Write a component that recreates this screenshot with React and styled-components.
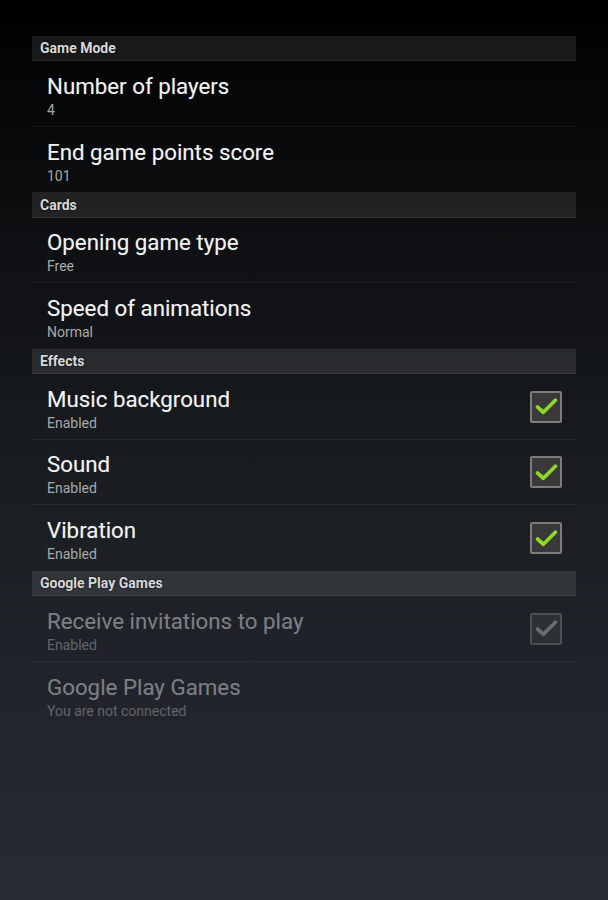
import styled, { createGlobalStyle } from "styled-components";

const GlobalStyle = createGlobalStyle`
  html, body {
    margin: 0;
    padding: 0;
  }
  body {
    background: linear-gradient(180deg, #000000 0%, #0d0f11 25%, #1c2025 60%, #272b32 100%);
    min-height: 900px;
    font-family: Roboto, "Noto Sans", sans-serif;
  }
`;

const sections = [
  {
    title: 'Game Mode',
    items: [
      { title: 'Number of players', summary: '4' },
      { title: 'End game points score', summary: '101' },
    ],
  },
  {
    title: 'Cards',
    items: [
      { title: 'Opening game type', summary: 'Free' },
      { title: 'Speed of animations', summary: 'Normal' },
    ],
  },
  {
    title: 'Effects',
    items: [
      { title: 'Music background', summary: 'Enabled', check: true },
      { title: 'Sound', summary: 'Enabled', check: true },
      { title: 'Vibration', summary: 'Enabled', check: true },
    ],
  },
  {
    title: 'Google Play Games',
    items: [
      { title: 'Receive invitations to play', summary: 'Enabled', check: true, disabled: true },
      { title: 'Google Play Games', summary: 'You are not connected', disabled: true },
    ],
  },
];

function CheckBox({ disabled }) {
  return (
    <Box $disabled={disabled}>
      <svg width="23" height="19" viewBox="0 0 22 18">
        <path
          d="M2.5 9.5 L8 14.5 L19.5 3"
          fill="none"
          stroke={disabled ? '#6a6d70' : '#8ed62b'}
          strokeWidth="3.6"
          strokeLinecap="round"
          strokeLinejoin="round"
        />
      </svg>
    </Box>
  );
}

export default function App() {
  return (
    <>
      <GlobalStyle />
      <Screen>
        <List>
          {sections.map((section) => (
            <div key={section.title}>
              <Category>{section.title}</Category>
              {section.items.map((item, i) => (
                <Pref key={item.title} $last={i === section.items.length - 1}>
                  <div className="texts">
                    <Title $disabled={item.disabled}>{item.title}</Title>
                    <Summary $disabled={item.disabled}>{item.summary}</Summary>
                  </div>
                  {item.check && <CheckBox disabled={item.disabled} />}
                </Pref>
              ))}
            </div>
          ))}
        </List>
      </Screen>
    </>
  );
}

const Screen = styled.div`
  width: 608px;
  height: 900px;
  box-sizing: border-box;
  padding: 36px 32px 0 32px;
`;

const List = styled.div`
  display: flex;
  flex-direction: column;
`;

const Category = styled.div`
  height: 25.3px;
  box-sizing: border-box;
  display: flex;
  align-items: center;
  padding-left: 8px;
  background-color: rgba(255, 255, 255, 0.09);
  border-bottom: 1px solid rgba(255, 255, 255, 0.06);
  color: #d8d8d8;
  font-size: 14px;
  font-weight: 700;
  text-shadow: 0 0 2px rgba(0, 0, 0, 0.9);
`;

const Pref = styled.div`
  height: 65.6px;
  box-sizing: border-box;
  display: flex;
  align-items: center;
  justify-content: space-between;
  padding: 0 14px 0 15px;
  border-bottom: ${(p) => (p.$last ? 'none' : '1px solid rgba(255, 255, 255, 0.05)')};

  .texts {
    display: flex;
    flex-direction: column;
    padding-top: 4px;
  }
`;

const Title = styled.div`
  font-size: 22.3px;
  line-height: 26px;
  color: ${(p) => (p.$disabled ? '#7b7f84' : '#f2f2f2')};
  text-shadow: 0 0 1px rgba(255, 255, 255, ${(p) => (p.$disabled ? 0.1 : 0.3)});
`;

const Summary = styled.div`
  font-size: 14px;
  line-height: 18px;
  margin-top: 2px;
  color: ${(p) => (p.$disabled ? '#62666b' : '#a9a9a9')};
`;

const Box = styled.div`
  width: 28px;
  height: 28px;
  display: flex;
  align-items: center;
  justify-content: center;
  border: 2px solid ${(p) => (p.$disabled ? '#4c5055' : '#7d7d7d')};
  border-radius: 2px;
  background-color: ${(p) => (p.$disabled ? '#2d3136' : '#393939')};
`;
